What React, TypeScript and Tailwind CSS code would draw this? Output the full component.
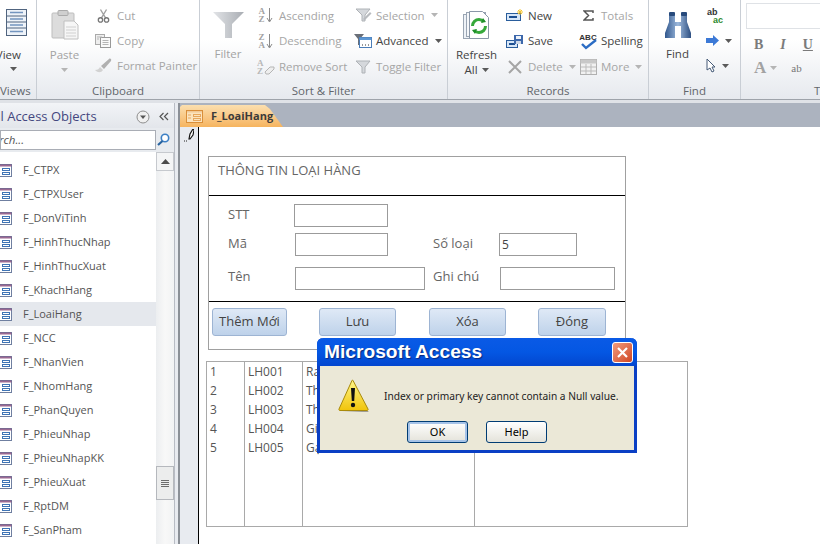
import type { ReactNode } from 'react';

const FONT = "font-['Open_Sans','Noto_Sans',sans-serif]";

const NAV_ITEMS = [
  'F_CTPX',
  'F_CTPXUser',
  'F_DonViTinh',
  'F_HinhThucNhap',
  'F_HinhThucXuat',
  'F_KhachHang',
  'F_LoaiHang',
  'F_NCC',
  'F_NhanVien',
  'F_NhomHang',
  'F_PhanQuyen',
  'F_PhieuNhap',
  'F_PhieuNhapKK',
  'F_PhieuXuat',
  'F_RptDM',
  'F_SanPham',
];

const ROWS = [
  ['1', 'LH001', 'Rau'],
  ['2', 'LH002', 'Thịt'],
  ['3', 'LH003', 'Thủy'],
  ['4', 'LH004', 'Gia'],
  ['5', 'LH005', 'Gạo'],
];

function Caret({ light }: { light?: boolean }) {
  return (
    <svg width="7" height="4" viewBox="0 0 7 4" className="shrink-0">
      <path d="M0 0h7L3.5 4z" fill={light ? '#b5b5b5' : '#5a5a5a'} />
    </svg>
  );
}

function FormIcon({ tab }: { tab?: boolean }) {
  const line = tab ? '#d98f3a' : '#8a4f7f';
  const row = tab ? '#e6a65c' : '#3f74b5';
  return (
    <svg width="17" height="13" viewBox="0 0 17 13" className="shrink-0">
      <rect x="0.5" y="0.5" width="16" height="12" fill={tab ? '#fbe3bd' : '#fff'} stroke={tab ? line : '#6f7fa0'} />
      <rect x="0.5" y="0.5" width="16" height="2" fill={line} opacity={tab ? 0.3 : 0.85} />
      <path d="M2 5h3M2 8h3" stroke={row} />
      <rect x="7.5" y="4.5" width="7" height="2" fill="none" stroke={row} />
      <rect x="7.5" y="8.5" width="7" height="2" fill="none" stroke={row} />
    </svg>
  );
}

function CutIcon() {
  return (
    <svg width="13" height="16" viewBox="0 0 15 17">
      <path d="M4 1l6 10M11 1L5 11" stroke="#a0a0a0" strokeWidth="1.6" />
      <circle cx="4" cy="13" r="2.5" fill="none" stroke="#777" strokeWidth="1.5" />
      <circle cx="11" cy="13" r="2.5" fill="none" stroke="#777" strokeWidth="1.5" />
    </svg>
  );
}

function CopyIcon() {
  return (
    <svg width="16" height="14" viewBox="0 0 16 14">
      <rect x="0.5" y="0.5" width="9" height="10" fill="#eee" stroke="#aaa" />
      <rect x="5.5" y="3.5" width="10" height="10" fill="#fafafa" stroke="#999" />
      <path d="M7.5 6.5h6M7.5 8.5h6M7.5 10.5h6M2 3h5M2 5h2" stroke="#b5b5b5" />
    </svg>
  );
}

function BrushIcon() {
  return (
    <svg width="19" height="17" viewBox="0 0 19 17">
      <path d="M1 13c3 0 4-1 5-3l3 3c-2 3-5 3-8 0z" fill="#d2d2d2" />
      <path d="M7 9l3 3 7-8c1-2-1-3-2-2z" fill="#b0b0b0" />
    </svg>
  );
}

function SortIcon({ top, bottom, dim }: { top: string; bottom: string; dim?: boolean }) {
  const c = dim ? '#b5b5b5' : '#8a8a8a';
  return (
    <span className="flex w-[15px] items-center">
      <span className="flex flex-col font-['Liberation_Serif',serif] text-[9px] leading-[8px] font-bold text-[#a2a2a2]">
        <span>{top}</span>
        <span>{bottom}</span>
      </span>
      <svg width="7" height="15" viewBox="0 0 7 15" className="ml-px">
        <path d="M3.5 0v13M1 10l2.5 4L6 10" fill="none" stroke={c} />
      </svg>
    </span>
  );
}

function EraseSortIcon() {
  return (
    <span className="relative flex w-[18px] flex-col font-['Liberation_Serif',serif] text-[9px] leading-[8px] font-bold text-[#b8b8b8]">
      <span>A</span>
      <span>Z</span>
      <svg width="11" height="9" viewBox="0 0 11 9" className="absolute top-[7px] left-[7px]">
        <path d="M1 6l5-5h4v2L5 8H2z" fill="#eee" stroke="#b5b5b5" />
      </svg>
    </span>
  );
}

function FunnelSmall({ pencil }: { pencil?: boolean }) {
  return (
    <svg width="17" height="14" viewBox="0 0 17 14">
      <path d="M1 1h14L10 7v6H7V7z" fill="#d5d8dc" stroke="#aeb2b6" />
      {pencil && <path d="M8 11l7-7 1.5 1.5-7 7z" fill="#b8bbbf" />}
    </svg>
  );
}

function AdvancedIcon() {
  return (
    <svg width="19" height="14" viewBox="0 0 19 14">
      <path d="M0 0h10L6 5v6H4V5z" fill="#6a6f78" />
      <rect x="5.5" y="3.5" width="12" height="10" fill="#fff" stroke="#4b7db8" />
      <rect x="5.5" y="3.5" width="12" height="2.5" fill="#5d97d3" />
      <path d="M8 11h1M11 11h1M14 11h1" stroke="#333" />
    </svg>
  );
}

function NewIcon() {
  return (
    <svg width="18" height="13" viewBox="0 0 18 13">
      <rect x="0.5" y="4.5" width="14" height="7" fill="#d7e6f7" stroke="#2a5d9c" />
      <path d="M3 8h8" stroke="#1d4f90" strokeWidth="2" />
      <path d="M14 0v6M11 3h6M12 1l4 4M16 1l-4 4" stroke="#f4c430" />
    </svg>
  );
}

function SaveIcon() {
  return (
    <svg width="18" height="13" viewBox="0 0 18 13">
      <rect x="0.5" y="5.5" width="11" height="7" fill="#d7e6f7" stroke="#2a5d9c" />
      <path d="M3 9h6" stroke="#1d4f90" strokeWidth="2" />
      <rect x="8" y="0" width="9" height="9" fill="#3d68ab" />
      <rect x="10" y="1" width="5" height="3" fill="#eef3fa" />
      <rect x="10" y="6" width="5" height="3" fill="#cfd9e8" />
    </svg>
  );
}

function DeleteIcon() {
  return (
    <svg width="14" height="14" viewBox="0 0 14 14">
      <path d="M1 1l12 12M13 1L1 13" stroke="#a5a5a5" strokeWidth="2" />
    </svg>
  );
}

function SigmaIcon() {
  return (
    <svg width="11" height="11" viewBox="0 0 11 11">
      <path d="M10 3V1H1l4.5 4.5L1 10h9V8" fill="none" stroke="#555" strokeWidth="1.5" />
    </svg>
  );
}

function SpellIcon() {
  return (
    <span className="relative flex h-[17px] w-[19px] justify-center font-['Liberation_Sans',sans-serif] text-[8px] leading-[9px] font-bold text-[#333]">
      ABC
      <svg width="17" height="11" viewBox="0 0 17 11" className="absolute top-[6px] left-[2px]">
        <path d="M1 5l4 4 10-8" fill="none" stroke="#2b6cc4" strokeWidth="2.4" />
      </svg>
    </span>
  );
}

function MoreIcon() {
  return (
    <svg width="17" height="16" viewBox="0 0 17 16">
      <rect x="0.5" y="0.5" width="16" height="15" fill="#f1f1f1" stroke="#b0b0b0" />
      <rect x="0.5" y="0.5" width="16" height="4" fill="#c8c8c8" />
      <path d="M1 8h15M1 12h15M6 5v10M11 5v10" stroke="#bbb" />
    </svg>
  );
}

function PasteIcon() {
  return (
    <svg width="28" height="30" viewBox="0 0 28 30">
      <rect x="1" y="3" width="22" height="25" rx="1" fill="#dcdcdc" stroke="#bdbdbd" />
      <rect x="7" y="0.5" width="10" height="5" rx="1" fill="#cfcfcf" stroke="#aaa" />
      <path d="M13 11h10l4 4v14H13z" fill="#f6f6f6" stroke="#c0c0c0" />
      <path d="M15 17h10M15 20h10M15 23h10M15 26h10" stroke="#d0d0d0" />
    </svg>
  );
}

function FunnelBig() {
  return (
    <svg width="31" height="26" viewBox="0 0 31 26" className="mt-[2px]">
      <defs>
        <linearGradient id="fn" x1="0" x2="1">
          <stop offset="0" stopColor="#e2e4e7" />
          <stop offset="1" stopColor="#a9adb3" />
        </linearGradient>
      </defs>
      <path d="M0 0h31L19 12v14h-7V12z" fill="url(#fn)" />
    </svg>
  );
}

function RefreshIcon() {
  return (
    <svg width="30" height="30" viewBox="0 0 30 30" className="mt-[1px]">
      <rect x="1.5" y="3.5" width="19" height="24" fill="#eef2f7" stroke="#9aa5b3" />
      <rect x="4.5" y="1.5" width="19" height="24" fill="#f5f7fa" stroke="#9aa5b3" />
      <path d="M7.5 0.5h13l6 6v21h-19z" fill="#fff" stroke="#8a97a8" />
      <circle cx="17" cy="15" r="6.5" fill="none" stroke="#35a83a" strokeWidth="3" strokeDasharray="15 5" />
      <path d="M21 7l3 4-5 1zM13 23l-3-4 5-1z" fill="#1f8f2a" />
    </svg>
  );
}

function BinocularIcon() {
  return (
    <svg width="28" height="26" viewBox="0 0 28 26" className="mt-[2px]">
      <defs>
        <linearGradient id="bn" x1="0" x2="1">
          <stop offset="0" stopColor="#32588e" />
          <stop offset="0.5" stopColor="#9db9dc" />
          <stop offset="1" stopColor="#2d4f82" />
        </linearGradient>
      </defs>
      <path d="M5 3h6v7h6V3h6v7l4 11v5h-10V14h-6v12H1v-5L5 10z" fill="url(#bn)" />
      <rect x="5" y="0" width="6" height="4" rx="1" fill="#274a7c" />
      <rect x="17" y="0" width="6" height="4" rx="1" fill="#274a7c" />
    </svg>
  );
}

function ReplaceIcon() {
  return (
    <span className="flex w-[17px] flex-col font-['Liberation_Sans',sans-serif] text-[9px] leading-[8px] font-bold">
      <span className="text-[#333]">ab</span>
      <span className="pl-[6px] text-[#2d8a2d]">ac</span>
    </span>
  );
}

function ArrowIcon() {
  return (
    <svg width="13" height="11" viewBox="0 0 13 11">
      <path d="M0 3h7V0l6 5.5L7 11V8H0z" fill="#3c79d6" />
    </svg>
  );
}

function CursorIcon() {
  return (
    <svg width="10" height="15" viewBox="0 0 10 15">
      <path d="M1 1v11l3-2 2 4 2-1-2-4h3z" fill="#fff" stroke="#465b78" />
    </svg>
  );
}

function RibbonGroup({ title, width, children, labelClass = 'text-center' }: { title: string; width: string; children: ReactNode; labelClass?: string }) {
  return (
    <div className={`${width} flex h-full shrink-0 flex-col overflow-hidden border-r border-[#c9ced5]`}>
      <div className="flex min-h-0 flex-1">{children}</div>
      <div className={`h-[20px] text-[11.5px] leading-[24px] whitespace-nowrap text-[#62666b] ${labelClass}`}>{title}</div>
    </div>
  );
}

function LargeButton({ width, icon, label, disabled }: { width: string; icon: ReactNode; label: ReactNode; disabled?: boolean }) {
  return (
    <div className={`${width} flex shrink-0 flex-col items-center pt-[10px] text-[11.5px] leading-[15px] ${disabled ? 'text-[#a3a3a3]' : 'text-[#444]'}`}>
      <div className="flex h-[37px] items-start">{icon}</div>
      {label}
    </div>
  );
}

function SmallButton({ icon, label, disabled, caret, iconWidth = 'w-[20px]' }: { icon: ReactNode; label: string; disabled?: boolean; caret?: boolean; iconWidth?: string }) {
  return (
    <div className={`flex h-[25px] items-center text-[11.5px] whitespace-nowrap ${disabled ? 'text-[#a6a6a6]' : 'text-[#444]'}`}>
      <span className={`${iconWidth} flex shrink-0 justify-center`}>{icon}</span>
      <span className="ml-[3px]">{label}</span>
      {caret && (
        <span className="ml-[6px]">
          <Caret light={disabled} />
        </span>
      )}
    </div>
  );
}

function ButtonColumn({ width, gap = 'gap-px', children }: { width: string; gap?: string; children: ReactNode }) {
  return <div className={`${width} flex shrink-0 flex-col pt-[3px] ${gap}`}>{children}</div>;
}

function Ribbon() {
  return (
    <div className="flex h-[100px] shrink-0 border-b border-[#9ea3aa] bg-gradient-to-b from-white from-40% to-[#e6e9ee]">
      <RibbonGroup title="Views" width="w-[37px]" labelClass="text-right pr-[12px]">
        <div className="flex w-full flex-col items-end overflow-hidden pt-[9px] pr-[15px] text-[11.5px] text-[#444]">
          <svg width="30" height="27" viewBox="0 0 30 27" className="mr-[-15px] shrink-0">
            <rect x="0.5" y="0.5" width="20" height="26" fill="#eef3f9" stroke="#50647f" />
            <path d="M0 7h21M0 13h21M0 19h21" stroke="#50647f" />
            <path d="M4 3.5h13M4 10h13M4 16h13M4 22.5h13" stroke="#7395bf" strokeWidth="1.5" />
          </svg>
          <span className="mt-[11px] leading-[15px] whitespace-nowrap">View</span>
          <span className="mt-[5px] mr-[4px]">
            <Caret />
          </span>
        </div>
      </RibbonGroup>

      <RibbonGroup title="Clipboard" width="w-[163px]">
        <LargeButton
          width="w-[55px]"
          disabled
          icon={<PasteIcon />}
          label={
            <>
              <span>Paste</span>
              <span className="mt-[6px]">
                <Caret light />
              </span>
            </>
          }
        />
        <ButtonColumn width="w-[105px]" gap="gap-0">
          <SmallButton disabled icon={<CutIcon />} label="Cut" iconWidth="w-[22px]" />
          <SmallButton disabled icon={<CopyIcon />} label="Copy" iconWidth="w-[22px]" />
          <SmallButton disabled icon={<BrushIcon />} label="Format Painter" iconWidth="w-[22px]" />
        </ButtonColumn>
      </RibbonGroup>

      <RibbonGroup title="Sort & Filter" width="w-[248px]">
        <LargeButton width="w-[56px]" disabled icon={<FunnelBig />} label={<span className="mt-[-1px]">Filter</span>} />
        <ButtonColumn width="w-[97px]">
          <SmallButton disabled icon={<SortIcon top="A" bottom="Z" />} label="Ascending" />
          <SmallButton disabled icon={<SortIcon top="Z" bottom="A" />} label="Descending" />
          <SmallButton disabled icon={<EraseSortIcon />} label="Remove Sort" />
        </ButtonColumn>
        <ButtonColumn width="w-[93px]">
          <SmallButton disabled caret icon={<FunnelSmall pencil />} label="Selection" />
          <SmallButton caret icon={<AdvancedIcon />} label="Advanced" />
          <SmallButton disabled icon={<FunnelSmall />} label="Toggle Filter" />
        </ButtonColumn>
      </RibbonGroup>

      <RibbonGroup title="Records" width="w-[201px]">
        <LargeButton
          width="w-[57px]"
          icon={<RefreshIcon />}
          label={
            <>
              <span>Refresh</span>
              <span className="flex items-center gap-[4px]">
                All <Caret />
              </span>
            </>
          }
        />
        <ButtonColumn width="w-[73px]">
          <SmallButton icon={<NewIcon />} label="New" />
          <SmallButton icon={<SaveIcon />} label="Save" />
          <SmallButton disabled caret icon={<DeleteIcon />} label="Delete" />
        </ButtonColumn>
        <ButtonColumn width="w-[68px]">
          <SmallButton disabled icon={<SigmaIcon />} label="Totals" />
          <SmallButton icon={<SpellIcon />} label="Spelling" />
          <SmallButton disabled caret icon={<MoreIcon />} label="More" />
        </ButtonColumn>
      </RibbonGroup>

      <RibbonGroup title="Find" width="w-[92px]">
        <LargeButton width="w-[57px]" icon={<BinocularIcon />} label={<span className="mt-[-1px]">Find</span>} />
        <div className="flex flex-col pt-[3px]">
          <span className="flex h-[25px] items-center pl-px">
            <ReplaceIcon />
          </span>
          <span className="flex h-[25px] items-center gap-[6px]">
            <ArrowIcon />
            <Caret />
          </span>
          <span className="flex h-[25px] items-center gap-[6px]">
            <CursorIcon />
            <Caret />
          </span>
        </div>
      </RibbonGroup>

      <div className="flex min-w-0 flex-1 flex-col overflow-hidden pt-[3px] pl-[5px]">
        <div className="h-[26px] w-[90px] shrink-0 border border-[#dfe2e6] bg-white" />
        <div className="mt-[2px] flex h-[26px] items-center gap-[17px] pl-[8px] font-['Liberation_Serif',serif] text-[14px] font-bold text-[#7b7b7b]">
          <span>B</span>
          <span className="italic">I</span>
          <span className="underline">U</span>
        </div>
        <div className="flex h-[22px] items-center gap-[4px] pl-[8px] font-['Liberation_Serif',serif] text-[17px] font-bold text-[#a2a2a2]">
          <span>A</span>
          <Caret light />
          <span className="ml-[10px] text-[11px] font-normal text-[#777]">ab</span>
        </div>
        <div className="mt-auto h-[20px] pl-[68px] text-[11.5px] leading-[24px] text-[#62666b]">T</div>
      </div>
    </div>
  );
}

function NavPane() {
  return (
    <div className="flex w-[175px] shrink-0 flex-col overflow-hidden border-r border-[#b8bcc4] bg-white">
      <div className="flex h-[25px] shrink-0 items-center bg-gradient-to-b from-[#f2f4f7] to-[#e3e6eb] pt-[2px]">
        <span className="ml-[-11px] w-[147px] shrink-0 text-[13px] whitespace-nowrap text-[#44477f]">All Access Objects</span>
        <svg width="14" height="14" viewBox="0 0 14 14" className="shrink-0">
          <circle cx="7" cy="7" r="6" fill="#f0f0f0" stroke="#8e8e8e" />
          <path d="M4 5.5h6L7 9z" fill="#555" />
        </svg>
        <svg width="10" height="9" viewBox="0 0 10 9" className="ml-[9px] shrink-0">
          <path d="M4.5 1L1 4.5 4.5 8M9 1L5.5 4.5 9 8" fill="none" stroke="#555" strokeWidth="1.2" />
        </svg>
      </div>
      <div className="flex h-[24px] shrink-0 items-center bg-[#e8ebef] pb-px">
        <div className="flex h-[20px] w-[156px] items-center overflow-hidden border border-[#a9adb5] bg-white">
          <span className="ml-[-20px] text-[11.5px] whitespace-nowrap text-[#555] italic">Search...</span>
        </div>
        <svg width="13" height="13" viewBox="0 0 13 13" className="ml-[1px]">
          <circle cx="8" cy="5" r="3.7" fill="#fff" stroke="#3c7fc4" strokeWidth="1.6" />
          <path d="M5.5 8L1 12" stroke="#27639f" strokeWidth="2.2" />
        </svg>
      </div>
      <div className="flex min-h-0 flex-1">
        <div className="w-[156px] shrink-0 pt-[6px]">
          {NAV_ITEMS.map((item) => (
            <div
              key={item}
              className={`flex h-[24px] items-center pl-[6px] ${item === 'F_LoaiHang' ? 'bg-[#e5e8ed]' : ''}`}
            >
              <span className="ml-[-11px]">
                <FormIcon />
              </span>
              <span className="ml-[11px] text-[11px] whitespace-nowrap text-[#555]">{item}</span>
            </div>
          ))}
        </div>
        <div className="flex flex-1 flex-col bg-gradient-to-r from-[#eceef0] via-[#f8f8f8] to-[#f2f3f4]">
          <div className="flex h-[19px] shrink-0 items-center justify-center border border-[#c6c9ce] bg-[#f4f5f6]">
            <svg width="9" height="5" viewBox="0 0 9 5">
              <path d="M0 5h9L4.5 0z" fill="#4b4b4b" />
            </svg>
          </div>
          <div className="mt-[295px] flex h-[34px] shrink-0 items-center justify-center border border-[#b5b8bd] bg-[#eceded]">
            <svg width="8" height="7" viewBox="0 0 8 7">
              <path d="M0 .5h8M0 2.5h8M0 4.5h8M0 6.5h8" stroke="#6d6d6d" />
            </svg>
          </div>
        </div>
      </div>
    </div>
  );
}

function Field({ width, value, className = '' }: { width: string; value?: string; className?: string }) {
  return (
    <div className={`${width} h-[23px] shrink-0 border border-[#9b9b9b] bg-white pl-[2px] text-[12px] leading-[21px] text-[#444] ${className}`}>
      {value}
    </div>
  );
}

function FormButton({ width, label, className = '' }: { width: string; label: string; className?: string }) {
  return (
    <div className={`${width} h-[28px] shrink-0 rounded-[3px] border border-[#9db4d3] bg-gradient-to-b from-[#dfe9f6] to-[#bed2ea] text-center text-[13px] leading-[25px] text-[#444] ${className}`}>
      {label}
    </div>
  );
}

function FormView() {
  return (
    <div className="flex min-w-0 flex-1 flex-col">
      <div className="flex h-[24px] shrink-0 items-end bg-[#acb3bf]">
        <div className="flex h-[22px] w-[103px] items-center bg-gradient-to-b from-[#fbdfaf] to-[#f6b45e] pl-[6px] [clip-path:polygon(0_2px,2px_0,85px_0,90px_4px,100%_100%,0_100%)]">
          <FormIcon tab />
          <span className="ml-[8px] text-[11px] font-bold text-[#3b3b3b]">F_LoaiHang</span>
        </div>
      </div>
      <div className="flex min-h-0 flex-1">
        <div className="w-[19px] shrink-0 border-r border-black bg-[#e8ebf0] pt-[2px] pl-[4px]">
          <svg width="10" height="13" viewBox="0 0 10 13">
            <path d="M5 10l1-5 3-5 1 1-1 5-3 4z" fill="#fff" stroke="#111" strokeWidth="1.2" />
            <path d="M0 12h1M2 12h1" stroke="#222" />
          </svg>
        </div>
        <div className="min-w-0 flex-1 bg-white pt-[29px] pl-[9px]">
          <div className="flex h-[194px] w-[418px] flex-col border border-[#a0a0a0] text-[13px] text-[#666]">
            <div className="h-[39px] shrink-0 border-b border-black pt-[4px] pl-[9px]">THÔNG TIN LOẠI HÀNG</div>
            <div className="h-[106px] shrink-0 border-b border-black pt-[8px] pl-[19px]">
              <div className="flex items-center">
                <span className="w-[66px] pb-[2px]">STT</span>
                <Field width="w-[94px]" />
              </div>
              <div className="mt-[6px] flex items-center">
                <span className="w-[67px] pb-[2px]">Mã</span>
                <Field width="w-[93px]" />
                <span className="ml-[45px] w-[66px] pb-[2px]">Số loại</span>
                <Field width="w-[78px]" value="5" />
              </div>
              <div className="mt-[11px] flex items-center">
                <span className="w-[67px] pb-[3px]">Tên</span>
                <Field width="w-[130px]" />
                <span className="ml-[8px] w-[67px] pb-[3px]">Ghi chú</span>
                <Field width="w-[115px]" />
              </div>
            </div>
            <div className="flex pt-[6px] pl-[3px]">
              <FormButton width="w-[75px]" label="Thêm Mới" />
              <FormButton width="w-[77px]" label="Lưu" className="ml-[32px]" />
              <FormButton width="w-[77px]" label="Xóa" className="ml-[33px]" />
              <FormButton width="w-[68px]" label="Đóng" className="ml-[32px]" />
            </div>
          </div>
          <div className="mt-[11px] ml-[-2px] grid h-[166px] w-[482px] grid-cols-[38px_58px_172px_1fr] border border-[#a9a9a9] text-[12px] leading-[19px] text-[#555]">
            {[0, 1, 2].map((col) => (
              <div key={col} className="border-r border-[#a9a9a9] pl-[3px]">
                {ROWS.map((row) => (
                  <div key={row[0]}>{row[col]}</div>
                ))}
              </div>
            ))}
            <div />
          </div>
        </div>
      </div>
    </div>
  );
}

function WarningIcon() {
  return (
    <svg width="32" height="33" viewBox="0 0 32 33">
      <defs>
        <linearGradient id="wr" x1="0" y1="0" x2="0" y2="1">
          <stop offset="0" stopColor="#fff68a" />
          <stop offset="1" stopColor="#f1c40a" />
        </linearGradient>
      </defs>
      <path d="M15 1.5L30 30c.4.8-.1 1.5-1 1.5H2c-.9 0-1.4-.7-1-1.5L14 1.5c.3-.6.7-.6 1 0z" fill="url(#wr)" stroke="#a98a0a" />
      <path d="M32 31l-2 2H4l27-1z" fill="#444" opacity="0.6" />
      <path d="M13 9h4l-.8 13h-2.4z" fill="#111" />
      <circle cx="15" cy="26" r="2.2" fill="#111" />
    </svg>
  );
}

function DialogButton({ label, focused }: { label: string; focused?: boolean }) {
  return (
    <div className={`h-[22px] w-[61px] rounded-[3px] border border-[#003c74] bg-gradient-to-b from-white to-[#e4e3da] text-center text-[11px] leading-[20px] text-black ${focused ? 'shadow-[inset_0_0_0_2px_#a6c3e8]' : ''}`}>
      {label}
    </div>
  );
}

function AlertDialog() {
  return (
    <div className="absolute top-[338px] left-[317px] flex h-[115px] w-[320px] flex-col rounded-t-[6px] border-x-[3px] border-b-[3px] border-[#0a3fc4] bg-[#ebe8d7] font-['Noto_Sans',sans-serif]">
      <div className="mx-[-3px] flex h-[28px] shrink-0 items-center rounded-t-[6px] bg-gradient-to-b from-[#0a5ae6] via-[#0457e3] to-[#0346cf] pr-[4px] pl-[7px]">
        <span className="flex-1 font-['Liberation_Sans',sans-serif] text-[19.2px] font-bold text-white [text-shadow:1px_1px_1px_#0a2a80]">Microsoft Access</span>
        <span className="flex h-[21px] w-[21px] items-center justify-center rounded-[3px] border border-white bg-gradient-to-br from-[#f09a7c] to-[#cf4420]">
          <svg width="11" height="11" viewBox="0 0 11 11">
            <path d="M1 1l9 9M10 1l-9 9" stroke="#fff" strokeWidth="2.2" />
          </svg>
        </span>
      </div>
      <div className="flex items-center pt-[13px] pl-[18px]">
        <WarningIcon />
        <span className="mt-[2px] ml-[14px] text-[10.2px] whitespace-nowrap text-[#222]">Index or primary key cannot contain a Null value.</span>
      </div>
      <div className="mt-[9px] flex justify-center gap-[18px]">
        <DialogButton label="OK" focused />
        <DialogButton label="Help" />
      </div>
    </div>
  );
}

export default function App() {
  return (
    <div className={`${FONT} relative flex h-[544px] w-[820px] flex-col overflow-hidden bg-white`}>
      <Ribbon />
      <div className="h-[3px] shrink-0 bg-[#dfe2e7]" />
      <div className="flex min-h-0 flex-1">
        <NavPane />
        <div className="w-[5px] shrink-0 bg-[#e8ebf0]">
          <div className="ml-[3px] h-full w-[2px] bg-[#8b9097]" />
        </div>
        <FormView />
      </div>
      <AlertDialog />
    </div>
  );
}
